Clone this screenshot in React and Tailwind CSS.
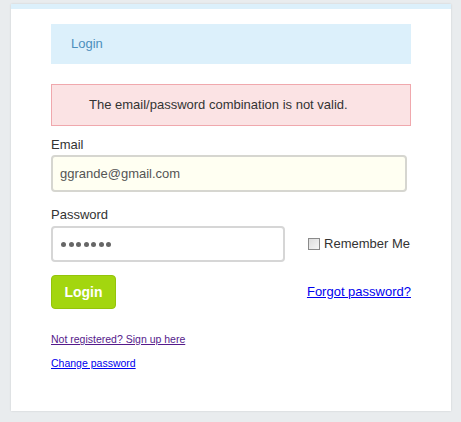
// Login form with error message
export default function App() {
  const font = { fontFamily: '"Liberation Sans", Arial, sans-serif' };

  return (
    <div className="min-h-[422px] w-[461px] bg-[#e9ecee] pt-[4px] pl-[11px]" style={font}>
      <div className="w-[440px] h-[407px] bg-white border-t-[5px] border-[#dcf0fb] shadow-[0_0_2px_rgba(0,0,0,0.12)] px-[40px] pt-[15px]">
        {/* Header */}
        <div className="h-[40px] bg-[#dcf0fb] flex items-center pl-[20px] text-[13px] text-[#4c8fbd]">Login</div>

        {/* Error */}
        <div className="mt-[20px] h-[42px] bg-[#fbe3e4] border border-[#f0a8ad] flex items-center pl-[37px] text-[13px] text-[#333]">
          The email/password combination is not valid.
        </div>

        {/* Email */}
        <div className="mt-[11px] text-[13px] text-[#333] leading-[16px]">Email</div>
        <div className="mt-[2px] w-[356px] h-[37px] bg-[#fffff2] border-2 border-[#d6d6d0] rounded-[4px] flex items-center pl-[7px] text-[13px] text-[#555]">
          ggrande@gmail.com
        </div>

        {/* Password */}
        <div className="mt-[15px] text-[13px] text-[#333] leading-[16px]">Password</div>
        <div className="mt-[3px] flex items-center justify-between">
          <div className="w-[234px] h-[36px] bg-white border-2 border-[#d6d6d6] rounded-[4px] flex items-center pl-[8px] gap-[2.5px]">
            {[0, 1, 2, 3, 4, 5, 6].map(i => (
              <span key={i} className="w-[5px] h-[5px] rounded-full bg-[#666]" />
            ))}
          </div>
          <label className="flex items-center gap-[4px] text-[13px] text-[#333] mr-[1px]">
            <span className="w-[12px] h-[12px] border border-[#8a8a8a] bg-gradient-to-br from-[#dcdcdc] to-[#f6f6f6]" />
            Remember Me
          </label>
        </div>

        {/* Actions */}
        <div className="mt-[13px] flex items-center justify-between">
          <button className="w-[65px] h-[34px] rounded-[4px] bg-[#a3d60f] border border-[#94c40a] text-white font-bold text-[14px]">Login</button>
          <a href="#" className="text-[13px] text-[#0000ee] underline">Forgot password?</a>
        </div>

        <div className="mt-[24px] text-[10.5px] leading-[12px]">
          <a href="#" className="text-[#551a8b] underline">Not registered? Sign up here</a>
        </div>
        <div className="mt-[12px] text-[10.5px] leading-[12px]">
          <a href="#" className="text-[#0000ee] underline">Change password</a>
        </div>
      </div>
    </div>
  );
}
